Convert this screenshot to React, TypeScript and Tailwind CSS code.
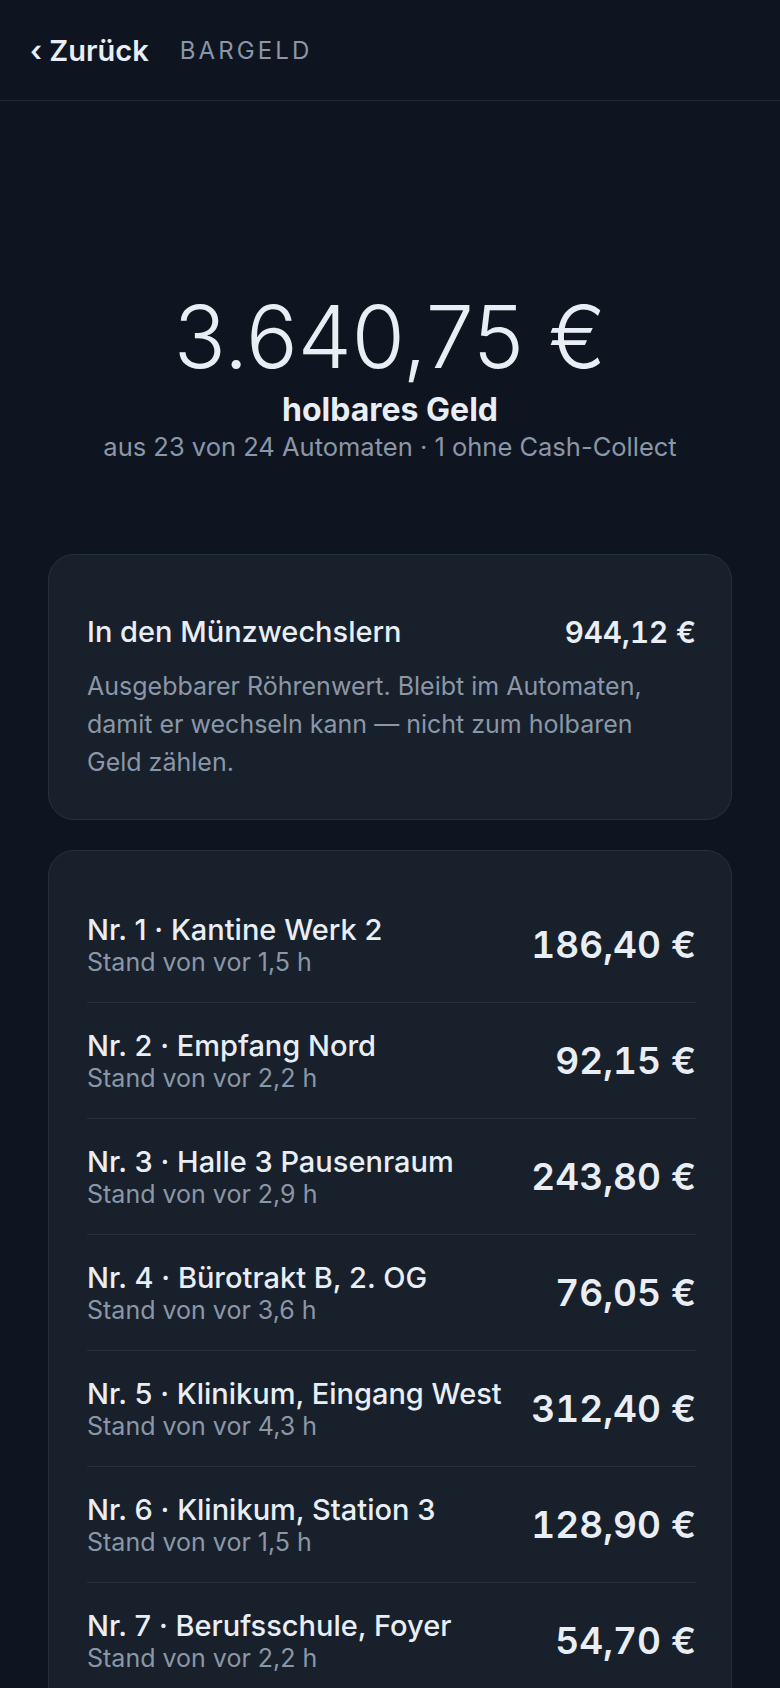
import React from "react";

type Machine = { nr: number; place: string; age: string; amount: string };

const machines: Machine[] = [
  { nr: 1, place: "Kantine Werk 2", age: "1,5", amount: "186,40 €" },
  { nr: 2, place: "Empfang Nord", age: "2,2", amount: "92,15 €" },
  { nr: 3, place: "Halle 3 Pausenraum", age: "2,9", amount: "243,80 €" },
  { nr: 4, place: "Bürotrakt B, 2. OG", age: "3,6", amount: "76,05 €" },
  { nr: 5, place: "Klinikum, Eingang West", age: "4,3", amount: "312,40 €" },
  { nr: 6, place: "Klinikum, Station 3", age: "1,5", amount: "128,90 €" },
  { nr: 7, place: "Berufsschule, Foyer", age: "2,2", amount: "54,70 €" },
];

// ── Row ──────────────────────────────────────────────────────────────────────
function Row({ m }: { m: Machine }) {
  return (
    <div className="flex items-center gap-4 border-b border-[#263140] pb-[24px] pt-[25px]">
      <div className="min-w-0 flex-1">
        <div className="whitespace-nowrap text-[29px] font-medium leading-[35px] text-[#e9eef5]">
          Nr. {m.nr} · {m.place}
        </div>
        <div className="text-[25px] leading-[31px] text-[#8a97a8]">Stand von vor {m.age} h</div>
      </div>
      <div className="flex-none text-[37px] font-semibold tabular-nums leading-[40px] text-[#e9eef5]">
        {m.amount}
      </div>
    </div>
  );
}

export default function App() {
  return (
    <div className="h-[1688px] overflow-hidden bg-[#0f1520] font-['Inter',sans-serif] text-[#e9eef5]">
      <header className="flex h-[101px] items-center border-b border-[#222c37] pl-[30px] pt-[2px]">
        <span className="text-[29px] font-semibold leading-[34px]">‹ Zurück</span>
        <span className="ml-[31px] text-[24px] leading-[30px] tracking-[0.13em] text-[#8a97a8]">BARGELD</span>
      </header>

      <section className="pt-[193px] text-center">
        <div className="text-[86px] font-light leading-[86px]">3.640,75 €</div>
        <div className="mt-[12px] text-[32px] font-bold leading-[36px]">holbares Geld</div>
        <div className="mt-[4px] text-[25.5px] leading-[30px] text-[#8a97a8]">
          aus 23 von 24 Automaten · 1 ohne Cash-Collect
        </div>
      </section>

      <div className="mx-[48px] mt-[92px] rounded-[26px] border border-[#263140] bg-[#18202b] pb-[38px] pl-[38px] pr-[35px] pt-[60px]">
        <div className="flex items-center justify-between">
          <span className="text-[29px] font-medium leading-[34px]">In den Münzwechslern</span>
          <span className="text-[29.5px] font-semibold tabular-nums leading-[34px]">944,12 €</span>
        </div>
        <p className="mt-[18px] pr-[14px] text-[25px] leading-[38px] text-[#8a97a8]">
          Ausgebbarer Röhrenwert. Bleibt im Automaten, damit er wechseln kann — nicht zum holbaren Geld zählen.
        </p>
      </div>

      <div className="mx-[48px] mt-[30px] rounded-[26px] border border-[#263140] bg-[#18202b] pb-[60px] pl-[38px] pr-[35px] pt-[36px]">
        {machines.map((m) => (
          <Row key={m.nr} m={m} />
        ))}
      </div>
    </div>
  );
}
